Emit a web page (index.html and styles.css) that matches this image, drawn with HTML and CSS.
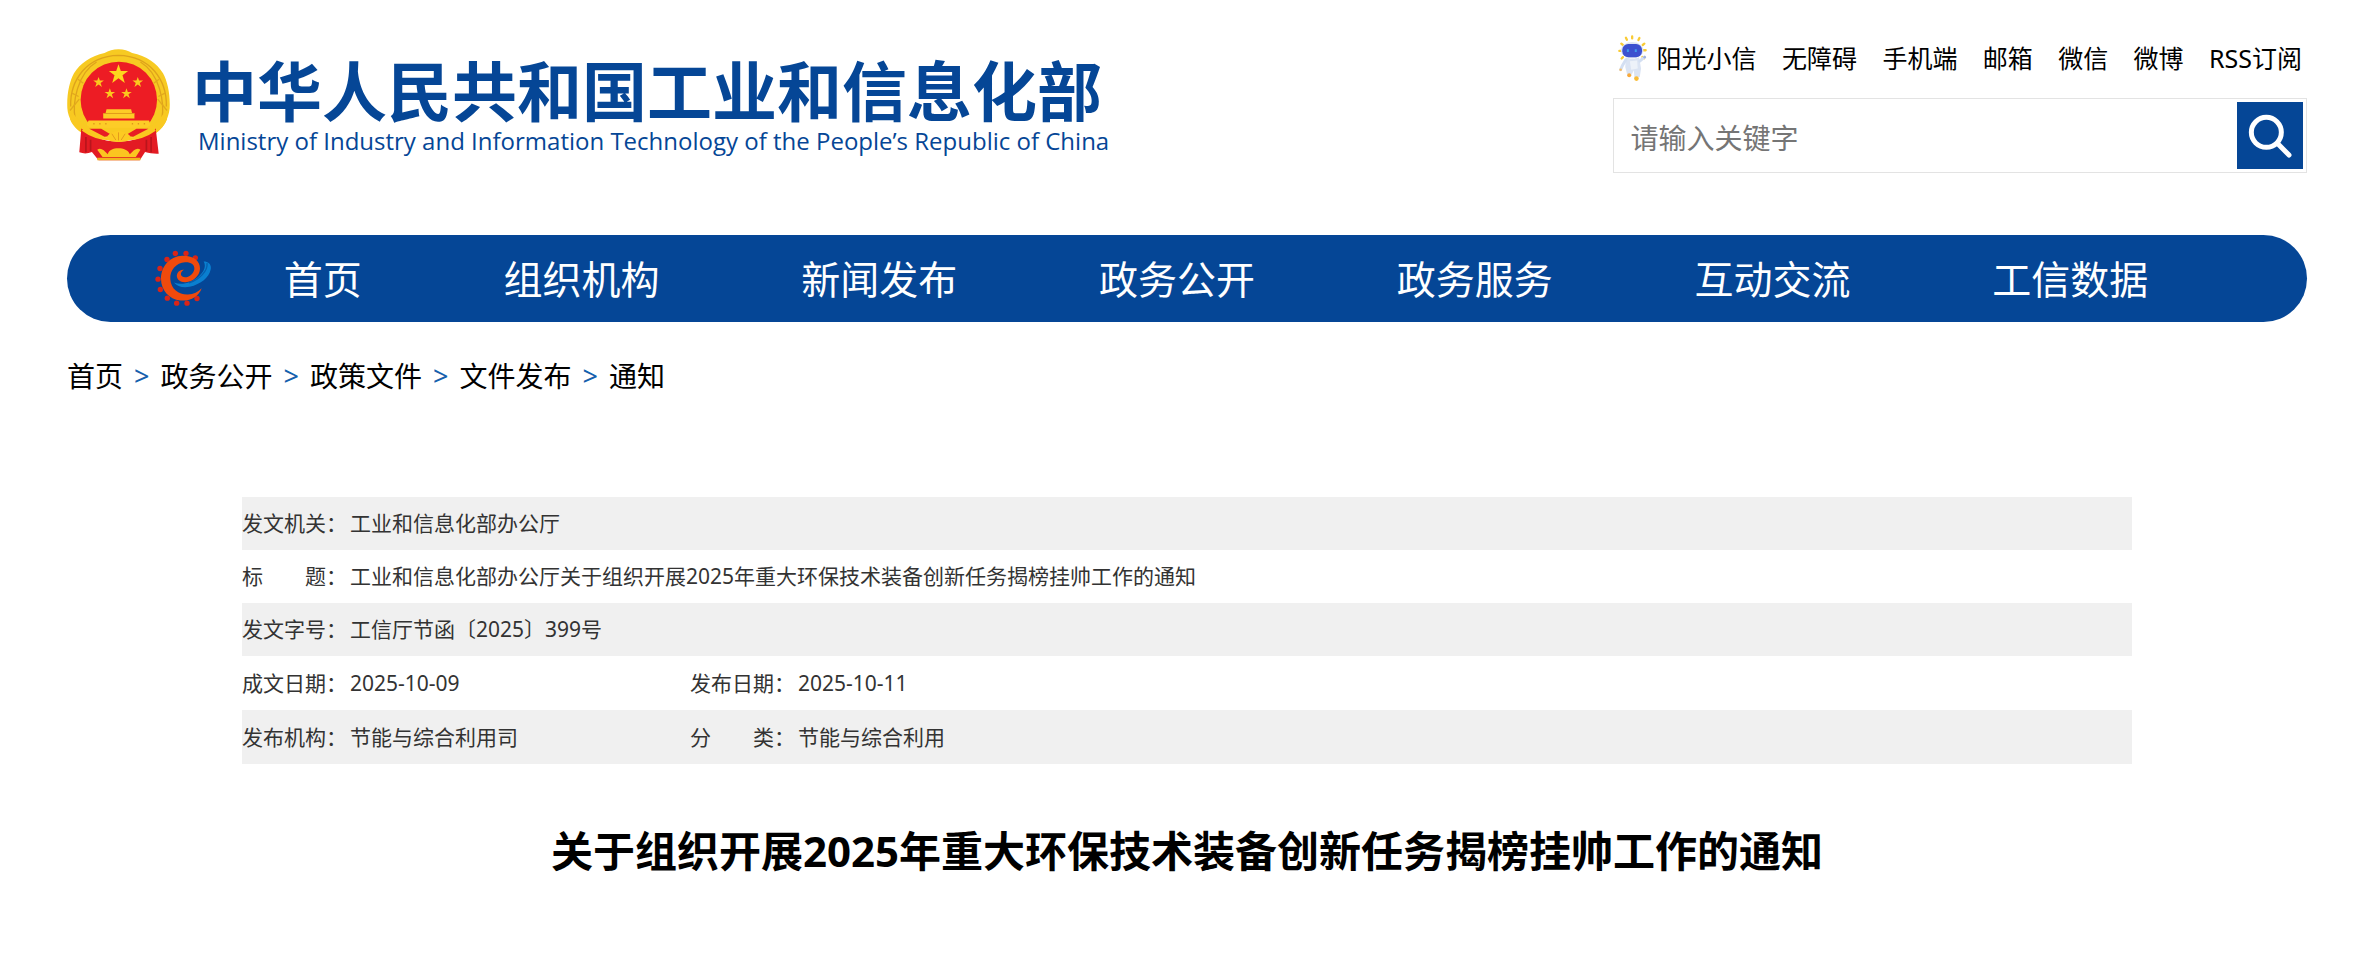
FILE: index.html
```html
<!DOCTYPE html>
<html lang="zh-CN">
<head>
<meta charset="UTF-8">
<meta name="viewport" content="width=device-width, initial-scale=1.0">
<title>关于组织开展2025年重大环保技术装备创新任务揭榜挂帅工作的通知</title>
<link rel="stylesheet" href="styles.css">
</head>
<body>
<div class="page">
    <header class="header">
        <a class="logo" href="#">
            <svg class="emblem" viewBox="51 28 310 335" aria-hidden="true">
                <path d="M206 28C222 28 236 33 247 39C290 48 322 70 340 100C354 125 362 165 360 205C356 240 340 265 318 280L96 280C72 262 54 235 52 205C50 165 58 125 72 100C90 70 124 48 164 39C176 33 190 28 206 28Z" fill="#f7ca22"/>
                <path d="M62 200C60 120 110 48 206 46C302 48 352 120 350 200M76 240C66 190 82 100 140 66M336 240C346 190 330 100 272 66" fill="none" stroke="#dea31c" stroke-width="4"/>
                <path d="M60 212l28-34M352 212l-28-34M66 160l20 10M346 160l-20 10M84 118l16 12M328 118l-16 12" stroke="#e2a91d" stroke-width="4"/>
                <circle cx="207" cy="180" r="115" fill="#ed1c24"/>
                <path d="M206 73l7 20h22l-17 13 7 23-19-14-19 14 7-23-17-13h22z" fill="#fdd61e"/>
                <path id="star" d="M146 111l4 11h12l-10 7 4 12-10-7-10 7 4-12-10-7h12z" fill="#fbc81e"/>
                <use href="#star" x="118"/>
                <use href="#star" x="34" y="34"/>
                <use href="#star" x="84" y="34"/>
                <path d="M170 208h74l3 12h7v16h-94v-16h7zM116 242h182l4 14-14 10H124l-14-10z" fill="#fdcc27"/>
                <path d="M160 221h94" stroke="#e29b1a" stroke-width="3"/>
                <path d="M130 252h4m14 0h4m14 0h4m76 0h4m14 0h4m14 0h4" stroke="#df981b" stroke-width="4"/>
                <path d="M66 214C84 244 106 262 130 264H284C308 262 330 242 346 214L352 238C344 262 322 284 290 294H126C94 284 68 262 60 238Z" fill="#f9c921"/>
                <path d="M118 267l46 24 24-4-34-20zM296 267l-46 24-24-4 34-20z" fill="#e81c24"/>
                <path d="M94 266C124 286 152 300 180 304C196 306 216 306 232 304C262 300 292 286 318 266L327 342C312 343 300 340 286 337L270 362H146L126 337C114 342 102 343 88 338Z" fill="#e31b23"/>
                <path d="M98 270C130 294 160 298 182 298H232C256 298 286 292 316 270" fill="none" stroke="#fbc91e" stroke-width="7"/>
                <path d="M170 298C174 280 190 276 206 273C222 276 240 280 244 298C232 310 180 310 170 298Z" fill="#fdca22"/>
                <path d="M206 302v-24M198 301l-12-19M214 301l12-19" stroke="#e59a1c" stroke-width="3"/>
                <path d="M142 330C152 322 162 330 174 344C178 320 232 320 240 344C252 330 262 322 272 330L258 352H158Z" fill="#fbc520"/>
                <path d="M142 354h130v8H142z" fill="#f2b51f"/>
                <path d="M108 292v46M122 300v34M304 292v46M290 300v34" stroke="#b9151c" stroke-width="5"/>
            </svg>
            <span class="logo-text">
                <span class="logo-cn">中华人民共和国工业和信息化部</span>
                <span class="logo-en" lang="en">Ministry of Industry and Information Technology of the People’s Republic of China</span>
            </span>
        </a>
        <div class="tools">
            <div class="links">
                <a class="robot-link" href="#">
                    <svg class="robot" viewBox="54 28 88 140" aria-hidden="true">
                        <path d="M97 31v6M78 35l3 6M119 36l-3 6M64 53l5 4M134 53l-5 4M58 75h6M138 73h-6M65 98l4-4M133 97l-5-4" stroke="#f9cb35" stroke-width="7" stroke-linecap="round"/>
                        <ellipse cx="97" cy="73" rx="34" ry="25" fill="#dfe5f3"/>
                        <path d="M78 94C92 100 104 100 118 94L124 128L120 154L104 158L102 134L94 150L82 148L76 124Z" fill="#dbe4f3"/>
                        <path d="M78 102L68 118L62 132M120 106l14-12" fill="none" stroke="#d3dff2" stroke-width="9" stroke-linecap="round"/>
                        <path d="M90 106l22-2 2 24-20 4z" fill="#edf2f9"/>
                        <rect x="67" y="54" width="60" height="40" rx="18" fill="#3d51cf"/>
                        <path d="M84 70v8M108 70v8" stroke="#3f9cec" stroke-width="6"/>
                        <circle cx="88" cy="149" r="6" fill="#f8a93a"/>
                        <circle cx="110" cy="159" r="7" fill="#f9bc35"/>
                        <circle cx="62" cy="132" r="4" fill="#f6bd66"/>
                        <circle cx="135" cy="94" r="4" fill="#9fb2dd"/>
                    </svg>
                    阳光小信
                </a>
                <a href="#">无障碍</a>
                <a href="#">手机端</a>
                <a href="#">邮箱</a>
                <a href="#">微信</a>
                <a href="#">微博</a>
                <a href="#">RSS订阅</a>
            </div>
            <form class="search">
                <input type="text" class="search-input" placeholder="请输入关键字" aria-label="请输入关键字">
                <button type="button" class="search-button" aria-label="搜索">
                    <svg viewBox="924 267 132 132" aria-hidden="true">
                        <circle cx="979" cy="322" r="45" fill="none" stroke="#fff" stroke-width="15"/>
                        <path d="M1012 355L1047 390" stroke="#fff" stroke-width="15" stroke-linecap="round"/>
                    </svg>
                </button>
            </form>
        </div>
    </header>

    <nav class="nav">
        <svg class="nav-logo" viewBox="44 34 168 170" aria-hidden="true">
            <g fill="#da2417">
                <circle cx="105" cy="44" r="8"/>
                <circle cx="137" cy="44" r="8"/>
                <circle cx="165" cy="57" r="8"/>
                <circle cx="80" cy="62" r="8"/>
                <circle cx="59" cy="89" r="8"/>
                <circle cx="53" cy="121" r="8"/>
                <circle cx="60" cy="152" r="8"/>
                <circle cx="81" cy="178" r="8"/>
                <circle cx="109" cy="193" r="8"/>
                <circle cx="140" cy="193" r="8"/>
                <circle cx="170" cy="179" r="8"/>
            </g>
            <path d="M190 68C206 68 214 78 211 92C206 116 182 136 148 144C128 148 110 143 101 131C124 140 154 132 176 112C192 97 198 82 190 68Z" fill="#0a7fd0"/>
            <path d="M200 73C203 96 178 122 146 132" fill="none" stroke="#075fae" stroke-width="4"/>
            <path d="M184 148C176 172 150 188 120 185C86 182 62 154 62 120C62 82 90 52 126 51C158 50 180 66 179 90C178 112 158 129 136 130C116 131 105 117 111 104C115 95 124 92 131 93C121 99 119 108 126 113C138 121 160 107 162 91C164 76 150 69 134 70C108 71 88 94 90 121C92 151 116 168 143 167C160 166 173 159 184 148Z" fill="#f04a0c"/>
        </svg>
        <ul class="nav-list">
            <li><a href="#">首页</a></li>
            <li><a href="#">组织机构</a></li>
            <li><a href="#">新闻发布</a></li>
            <li><a href="#">政务公开</a></li>
            <li><a href="#">政务服务</a></li>
            <li><a href="#">互动交流</a></li>
            <li><a href="#">工信数据</a></li>
        </ul>
    </nav>

    <div class="crumbs">
        <a href="#">首页</a>
        <span>&gt;</span>
        <a href="#">政务公开</a>
        <span>&gt;</span>
        <a href="#">政策文件</a>
        <span>&gt;</span>
        <a href="#">文件发布</a>
        <span>&gt;</span>
        <a href="#">通知</a>
    </div>

    <main class="article">
        <table class="info">
            <tr>
                <th scope="row">发文机关：</th>
                <td colspan="3">工业和信息化部办公厅</td>
            </tr>
            <tr>
                <th scope="row">标&emsp;&emsp;题：</th>
                <td colspan="3">工业和信息化部办公厅关于组织开展2025年重大环保技术装备创新任务揭榜挂帅工作的通知</td>
            </tr>
            <tr>
                <th scope="row">发文字号：</th>
                <td colspan="3">工信厅节函〔2025〕399号</td>
            </tr>
            <tr class="pair">
                <th scope="row">成文日期：</th>
                <td class="first">2025-10-09</td>
                <th scope="row">发布日期：</th>
                <td>2025-10-11</td>
            </tr>
            <tr class="pair">
                <th scope="row">发布机构：</th>
                <td class="first">节能与综合利用司</td>
                <th scope="row">分&emsp;&emsp;类：</th>
                <td>节能与综合利用</td>
            </tr>
        </table>
        <h1 class="title">关于组织开展2025年重大环保技术装备创新任务揭榜挂帅工作的通知</h1>
    </main>
</div>
</body>
</html>
```
FILE: styles.css
```css
* {
    box-sizing: border-box;
}
body {
    margin: 0;
    font-family: "Noto Sans", "Noto Sans CJK SC", sans-serif;
    color: #000;
    background-color: #fff;
}
a {
    color: inherit;
    text-decoration: none;
}
.page {
    padding: 0 71px 0 67px;
}

/* 页头 */
.header {
    display: flex;
    justify-content: space-between;
    padding: 34px 0 62px;
}
.logo {
    display: flex;
    align-items: center;
    align-self: flex-start;
    gap: 22px;
    padding-top: 15px;
    color: #054696;
    white-space: nowrap;
}
.emblem {
    width: 103px;
    height: 112px;
}
.logo-text {
    display: flex;
    flex-direction: column;
    gap: 2px;
}
.logo-cn {
    font-family: "Noto Sans CJK SC", sans-serif;
    font-size: 65px;
    font-weight: bold;
    line-height: 70px;
}
.logo-en {
    padding-left: 6px;
    font-family: "Open Sans", sans-serif;
    font-size: 24px;
    line-height: 32px;
}
.tools {
    width: 31%;
}
.links {
    display: flex;
    align-items: center;
    justify-content: space-between;
    height: 48px;
    padding: 0 5px;
    margin-bottom: 16px;
    font-size: 25px;
    line-height: 32px;
    white-space: nowrap;
}
.robot-link {
    display: flex;
    align-items: center;
    gap: 10px;
}
.robot {
    width: 29px;
    height: 47px;
}
.search {
    display: flex;
    height: 75px;
    padding: 3px;
    border: 1px solid #e3e3e3;
}
.search-input {
    flex: 1;
    min-width: 0;
    padding: 4px 14px 0;
    border: none;
    outline: none;
    font-family: inherit;
    font-size: 28px;
}
.search-input::placeholder {
    color: #757575;
}
.search-button {
    display: flex;
    align-items: center;
    justify-content: center;
    width: 66px;
    padding: 0;
    border: none;
    background-color: #054696;
    cursor: pointer;
}
.search-button svg {
    width: 44px;
    height: 44px;
}

/* 导航 */
.nav {
    display: flex;
    align-items: center;
    gap: 2px;
    height: 87px;
    padding: 0 88px;
    border-radius: 44px;
    background-color: #054696;
}
.nav-logo {
    width: 56px;
    height: 57px;
}
.nav-list {
    display: flex;
    flex: 1;
    margin: 0;
    padding: 0;
    list-style: none;
}
.nav-list li {
    flex: 1 1 auto;
    text-align: center;
}
.nav-list a {
    color: #fff;
    font-size: 39px;
    line-height: 87px;
    white-space: nowrap;
}

.crumbs {
    display: flex;
    gap: 11px;
    padding-top: 34px;
    font-size: 28px;
    line-height: 40px;
}
.crumbs span {
    font-size: 27px;
    color: #1560ad;
}

/* 文件信息 */
.article {
    padding: 101px 175px 0;
}
.info {
    width: 100%;
    border-collapse: collapse;
    font-size: 21px;
    line-height: 30px;
    color: #333;
}
.info tr {
    height: 53px;
}
.info tr:nth-child(odd) {
    background-color: #f0f0f0;
}
.info th,
.info td {
    padding: 0 0 2px;
}
.info th {
    width: 108px;
    font-weight: normal;
    text-align: left;
    white-space: nowrap;
}
.info .pair {
    height: 54px;
}
.info .pair th,
.info .pair td {
    padding: 0;
}
.info .first {
    width: 340px;
}
.title {
    margin: 57px 0 0;
    font-size: 42px;
    line-height: 60px;
    text-align: center;
}
```
